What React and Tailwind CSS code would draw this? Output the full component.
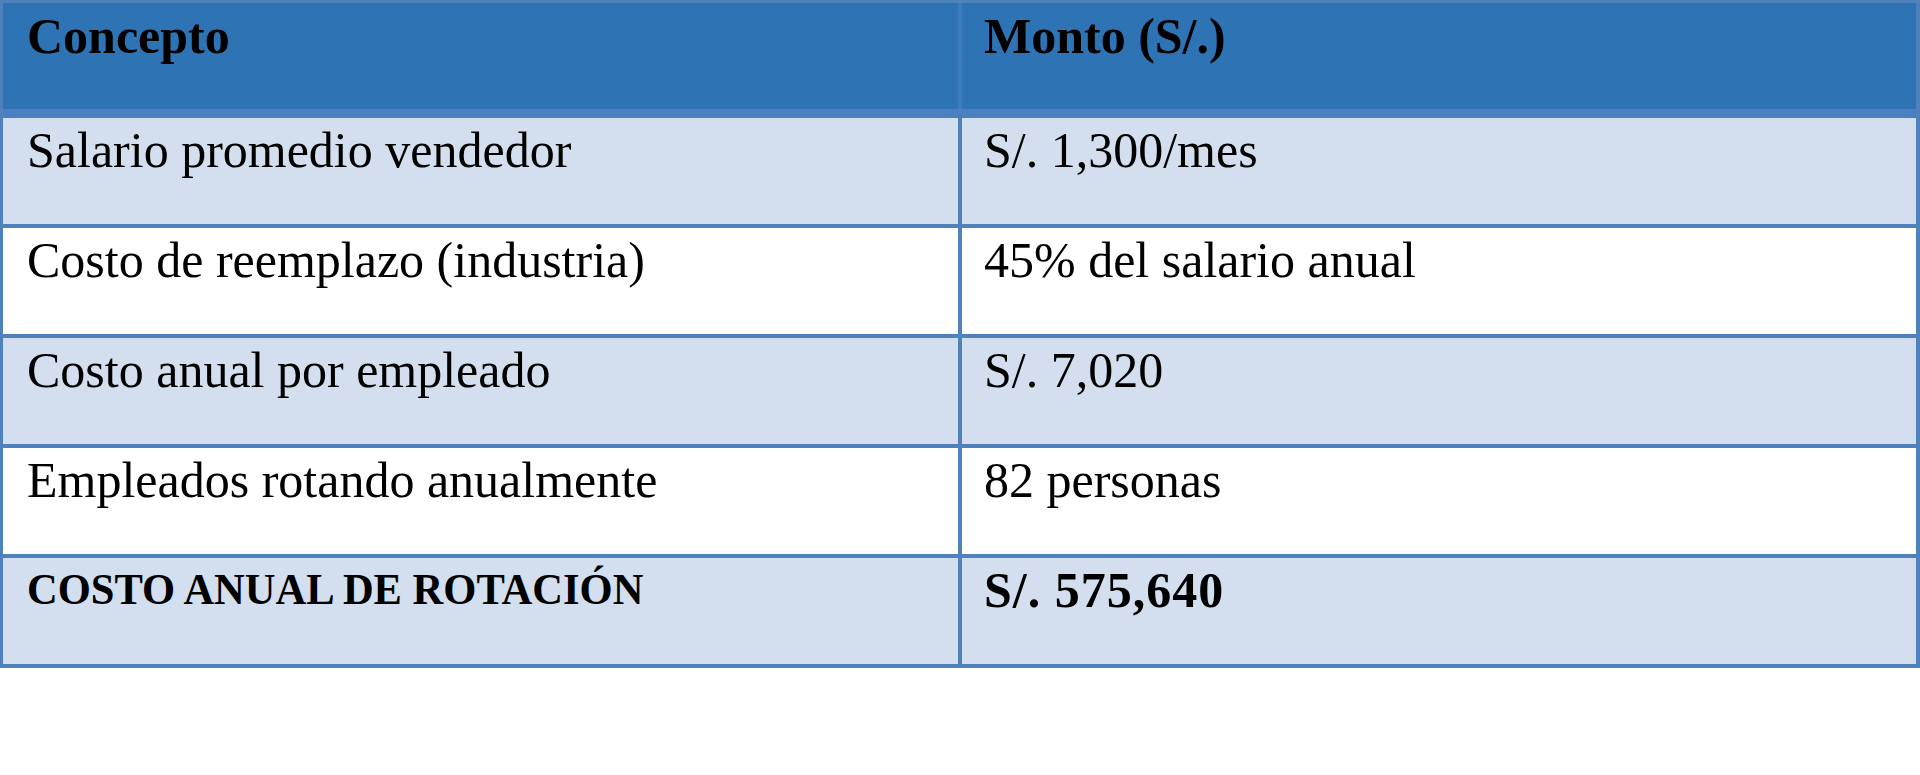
import React from "react";

const rows = [
  { concepto: "Salario promedio vendedor", monto: "S/. 1,300/mes", shade: true },
  { concepto: "Costo de reemplazo (industria)", monto: "45% del salario anual", shade: false },
  { concepto: "Costo anual por empleado", monto: "S/. 7,020", shade: true },
  { concepto: "Empleados rotando anualmente", monto: "82 personas", shade: false },
];

const Cell = ({ children, first, className = "" }) => (
  <div
    className={`h-[106px] pt-[7px] ${
      first ? "pl-6 border-r-4 border-[#4f81bd]" : "pl-[22px]"
    } ${className}`}
  >
    {children}
  </div>
);

const App = () => {
  return (
    <div className="w-[1920px] h-[775px] bg-white text-black [font-family:'Liberation_Serif','Times_New_Roman',serif] text-[50px] leading-none">
      <div className="border-[#4f81bd] border-t-[3px] border-l-[3px] border-r-4">
        {/* header */}
        <div className="grid grid-cols-[959px_1fr] bg-[#2e74b5] border-b-[9px] border-[#4a7fc0] font-bold">
          <div className="h-[106px] pl-6 pt-[8px] border-r-4 border-[#3f7bbd]">
            Concepto
          </div>
          <div className="h-[106px] pl-[22px] pt-[8px]">Monto (S/.)</div>
        </div>

        {rows.map((row) => (
          <div
            key={row.concepto}
            className={`grid grid-cols-[959px_1fr] border-b-4 border-[#4f81bd] ${
              row.shade ? "bg-[#d3dfee]" : "bg-white"
            }`}
          >
            <Cell first>{row.concepto}</Cell>
            <Cell>{row.monto}</Cell>
          </div>
        ))}

        {/* total */}
        <div className="grid grid-cols-[959px_1fr] border-b-4 border-[#4f81bd] bg-[#d3dfee] font-bold">
          <Cell first className="text-[45px] pt-[9px]">
            <span className="inline-block origin-left scale-x-[0.945] whitespace-nowrap">
              COSTO ANUAL DE ROTACIÓN
            </span>
          </Cell>
          <Cell className="tracking-[1px]">S/. 575,640</Cell>
        </div>
      </div>
    </div>
  );
};

export default App;
